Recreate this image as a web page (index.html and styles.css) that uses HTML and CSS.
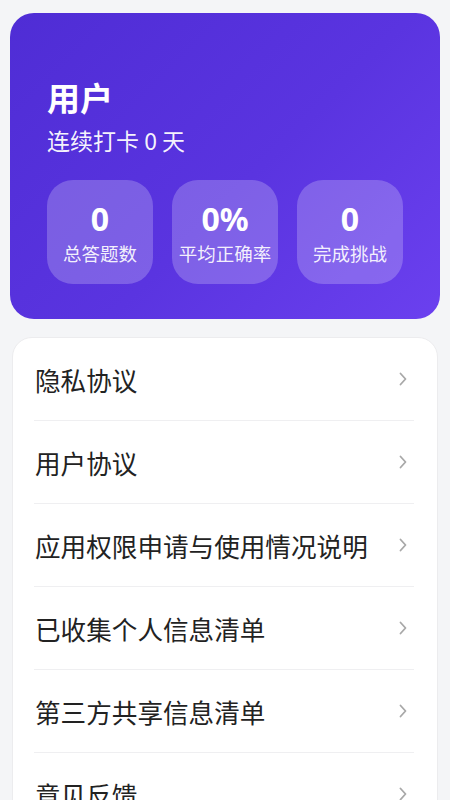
FILE: index.html
```html
<!DOCTYPE html>
<html lang="zh-CN">
<head>
<meta charset="utf-8">
<link rel="stylesheet" href="styles.css">
</head>
<body>
<div class="page">
  <section class="profile">
    <h1 class="name">用户</h1>
    <p class="streak">连续打卡 0 天</p>
    <div class="stats">
      <div class="stat"><span class="num">0</span><span class="label">总答题数</span></div>
      <div class="stat"><span class="num">0%</span><span class="label">平均正确率</span></div>
      <div class="stat"><span class="num">0</span><span class="label">完成挑战</span></div>
    </div>
  </section>
  <ul class="menu">
    <li class="item"><span>隐私协议</span><svg class="chev" viewBox="0 0 8 14"><path d="M1.5 1.5 L6.5 7 L1.5 12.5"/></svg></li>
    <li class="item"><span>用户协议</span><svg class="chev" viewBox="0 0 8 14"><path d="M1.5 1.5 L6.5 7 L1.5 12.5"/></svg></li>
    <li class="item"><span>应用权限申请与使用情况说明</span><svg class="chev" viewBox="0 0 8 14"><path d="M1.5 1.5 L6.5 7 L1.5 12.5"/></svg></li>
    <li class="item"><span>已收集个人信息清单</span><svg class="chev" viewBox="0 0 8 14"><path d="M1.5 1.5 L6.5 7 L1.5 12.5"/></svg></li>
    <li class="item"><span>第三方共享信息清单</span><svg class="chev" viewBox="0 0 8 14"><path d="M1.5 1.5 L6.5 7 L1.5 12.5"/></svg></li>
    <li class="item"><span>意见反馈</span><svg class="chev" viewBox="0 0 8 14"><path d="M1.5 1.5 L6.5 7 L1.5 12.5"/></svg></li>
  </ul>
</div>
</body>
</html>
```
FILE: styles.css
```css
* { box-sizing: border-box; }
html, body {
  margin: 0;
  padding: 0;
  background: #f4f5f7;
  font-family: "Noto Sans CJK SC", "Noto Sans", sans-serif;
  overflow: hidden;
}
.page {
  padding: 13px 10px 0;
  height: 800px;
}
.profile {
  background: linear-gradient(135deg, #4f2dd5 0%, #5a34e0 55%, #6b40ef 100%);
  border-radius: 24px;
  padding: 64px 37px 35px;
  color: #fff;
}
.name {
  margin: 0;
  font-size: 33px;
  line-height: 40px;
  font-weight: 700;
}
.streak {
  margin: 8px 0 0;
  font-size: 23px;
  line-height: 30px;
  color: rgba(255,255,255,0.95);
}
.stats {
  margin-top: 25px;
  display: grid;
  grid-template-columns: repeat(3, 106px);
  gap: 19px;
}
.stat {
  height: 104px;
  border-radius: 26px;
  background: rgba(255,255,255,0.22);
  display: flex;
  flex-direction: column;
  align-items: center;
  padding-top: 20px;
}
.num {
  font-family: "Noto Sans", "Noto Sans CJK SC", sans-serif;
  font-size: 32px;
  line-height: 38px;
  font-weight: 700;
}
.label {
  margin-top: 3px;
  font-size: 18.5px;
  line-height: 24px;
  color: rgba(255,255,255,0.92);
}
.menu {
  list-style: none;
  margin: 18px 2px 0;
  padding: 0 23px 0 21px;
  background: #fff;
  border: 1px solid #ececee;
  border-radius: 20px;
}
.item {
  height: 83px;
  border-bottom: 1px solid #efeff1;
  display: flex;
  align-items: center;
  justify-content: space-between;
  padding: 0 7px 0 1px;
  font-size: 25.6px;
  color: #222;
}
.chev {
  width: 8px;
  height: 14px;
  fill: none;
  stroke: #a8a8a8;
  stroke-width: 1.8;
  stroke-linecap: round;
  stroke-linejoin: round;
}
```
